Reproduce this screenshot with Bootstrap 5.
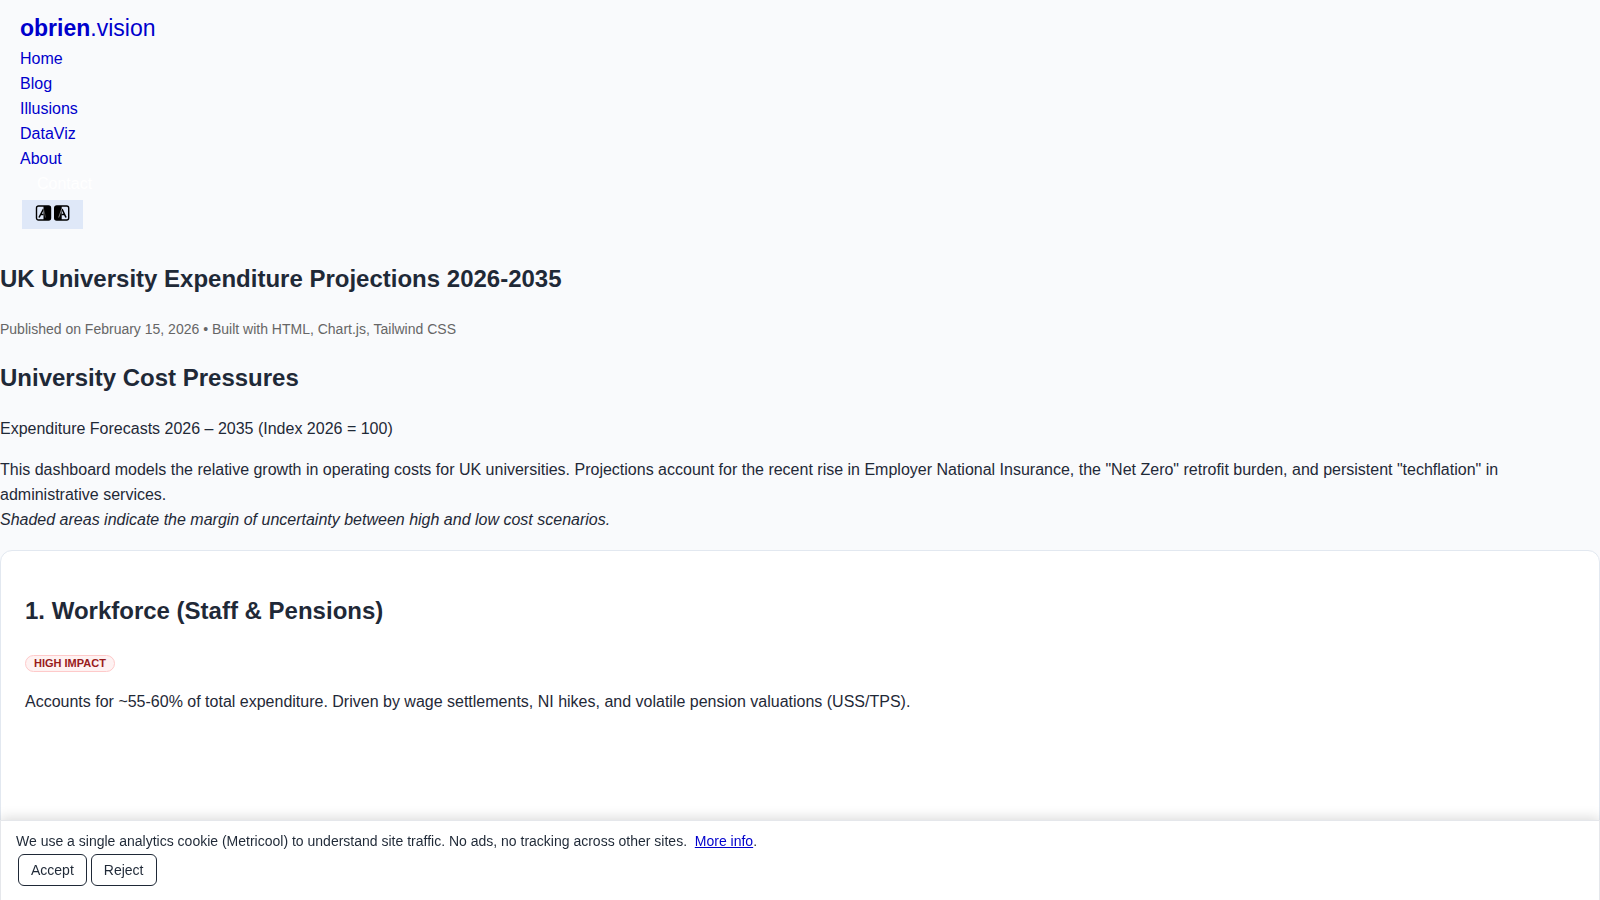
<!DOCTYPE html>
<html lang="en">
<head>
<meta charset="utf-8">
<meta name="viewport" content="width=device-width, initial-scale=1">
<title>UK University Expenditure Projections 2026-2035</title>
<link href="https://cdn.jsdelivr.net/npm/bootstrap@5.3.0/dist/css/bootstrap.min.css" rel="stylesheet">
<style>
body { font-family: "Liberation Sans", Arial, sans-serif; font-size: 16px; line-height: 25px; color: #1f2937; background: #f9fafc; }
a { color: #0000cc; }
.site-nav { padding: 10px 20px 0; }
.brand { font-size: 23px; line-height: 36px; }
.contact-link { color: #fff; padding: 0 17px; }
.contrast-btn { background: #dfe8f8; border: 0; border-radius: 0; width: 61px; height: 29px; margin: 4px 2px 0; padding: 0 0 3px; }
h1, h2 { font-size: 24px; line-height: 38px; font-weight: 700; margin: 0; }
main { padding-top: 31px; }
.meta { font-size: 14px; line-height: 22px; color: #666; margin: 20px 0 19px; }
.subtitle { margin: 19px 0 16px; }
.intro { margin: 0 0 18px; }
.panel { border: 1px solid #e2e8f0; border-radius: 12px; background: #fff; padding: 41px 24px 24px; min-height: 480px; }
.impact-row { margin: 25px 0 17px; }
.impact { font-size: 11px; line-height: 14px; font-weight: 700; color: #991b1b; background: #fef2f2; border: 1px solid #fecaca; border-radius: 9px; padding: 0 8px 1px; }
.cookie { background: #fff; border: 1px solid #e5e7eb; border-bottom: 0; padding: 9px 15px 14px; font-size: 14px; line-height: 22px; box-shadow: 0 -2px 12px rgba(0,0,0,.15); }
.cookie-actions { margin: 2px 2px 0; }
.cookie button { font-size: 14px; line-height: 22px; color: #1f2937; background: #fff; border: 1px solid #1f2937; border-radius: 6px; padding: 4px 12px; }
</style>
</head>
<body>
<nav class="site-nav d-flex flex-column align-items-start" aria-label="Main">
  <a class="brand text-decoration-none" href="#"><strong>obrien</strong>.vision</a>
  <a class="text-decoration-none" href="#">Home</a>
  <a class="text-decoration-none" href="#">Blog</a>
  <a class="text-decoration-none" href="#">Illusions</a>
  <a class="text-decoration-none" href="#">DataViz</a>
  <a class="text-decoration-none" href="#">About</a>
  <a class="contact-link text-decoration-none" href="#">Contact</a>
  <button class="contrast-btn d-flex align-items-center justify-content-center" type="button" aria-label="Toggle contrast">
    <svg width="35" height="17" viewBox="0 0 35 17" fill="none" stroke="#000" aria-hidden="true">
      <rect x="1.500" y="1" width="14" height="14" rx="2" stroke-width="1.400"/>
      <path d="M8.500 1h5a2 2 0 0 1 2 2v10a2 2 0 0 1-2 2h-5z" fill="#000" stroke="none"/>
      <path d="M4 12.500 8.500 4M5.500 9.500h3" stroke-width="1.600"/>
      <path d="M8.500 4l2 8.500" stroke="#777" stroke-width=".6"/>
      <rect x="19.700" y="1" width="14" height="14" rx="2" stroke-width="1.400"/>
      <path d="M26.700 1h-5a2 2 0 0 0-2 2v10a2 2 0 0 0 2 2h5z" fill="#000" stroke="none"/>
      <path d="M27 4l4 8.500M26.500 9.500h3.200" stroke-width="1.600"/>
      <path d="M26.700 4l-3 8.500" stroke="#999" stroke-width=".8"/>
    </svg>
  </button>
</nav>
<main>
  <h1>UK University Expenditure Projections 2026-2035</h1>
  <p class="meta">Published on February 15, 2026 • Built with HTML, Chart.js, Tailwind CSS</p>
  <h2>University Cost Pressures</h2>
  <p class="subtitle">Expenditure Forecasts 2026 – 2035 (Index 2026 = 100)</p>
  <p class="intro">This dashboard models the relative growth in operating costs for UK universities. Projections account for the recent rise in Employer National Insurance, the "Net Zero" retrofit burden, and persistent "techflation" in administrative services.<br><em>Shaded areas indicate the margin of uncertainty between high and low cost scenarios.</em></p>
  <section class="panel">
    <h2>1. Workforce (Staff &amp; Pensions)</h2>
    <div class="impact-row d-flex"><span class="impact">HIGH IMPACT</span></div>
    <p class="mb-3">Accounts for ~55-60% of total expenditure. Driven by wage settlements, NI hikes, and volatile pension valuations (USS/TPS).</p>
  </section>
</main>
<aside class="cookie fixed-bottom" aria-label="Cookie notice">
  <div>We use a single analytics cookie (Metricool) to understand site traffic. No ads, no tracking across other sites.&nbsp; <a href="#">More info</a>.</div>
  <div class="cookie-actions d-flex gap-1">
    <button type="button">Accept</button>
    <button type="button">Reject</button>
  </div>
</aside>
<script src="https://cdn.jsdelivr.net/npm/bootstrap@5.3.0/dist/js/bootstrap.bundle.min.js"></script>
</body>
</html>
